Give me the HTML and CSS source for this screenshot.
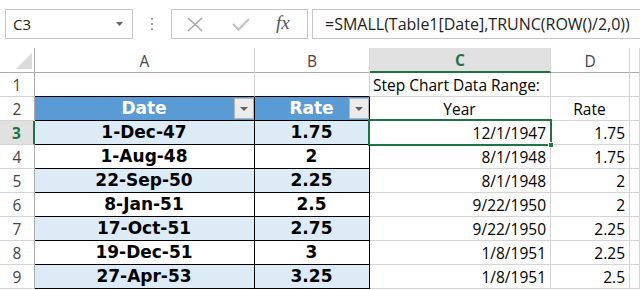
FILE: index.html
```html
<!DOCTYPE html>
<html lang="en">
<head>
    <meta charset="UTF-8">
    <title>Step Chart Data</title>
    <link rel="stylesheet" href="styles.css">
</head>
<body>
    <div class="topbar">
        <div class="namebox">
            <span>C3</span>
            <svg class="caret" width="8" height="5" viewBox="0 0 8 5"><path d="M0 0H7L3.5 4Z" fill="#666"/></svg>
        </div>
        <div class="grip"><i></i><i></i><i></i></div>
        <div class="buttons">
            <svg class="icon" width="16" height="15" viewBox="0 0 16 15"><path d="M1 1L15 14M15 1L1 14" stroke="#a8a8a8" stroke-width="1.6" fill="none"/></svg>
            <svg class="icon" width="18" height="13" viewBox="0 0 18 13"><path d="M1 6L6.5 11.5L17 1" stroke="#c4c4c4" stroke-width="2.4" fill="none"/></svg>
            <span class="fx">fx</span>
        </div>
        <div class="formula">=SMALL(Table1[Date],TRUNC(ROW()/2,0))</div>
    </div>

    <div class="sheet">
        <!-- column headers -->
        <div class="hd corner"><span class="tri"></span></div>
        <div class="hd">A</div>
        <div class="hd">B</div>
        <div class="hd sel">C</div>
        <div class="hd">D</div>
        <div class="hd"></div>

        <!-- row 1 -->
        <div class="rh">1</div>
        <div class="c above"></div>
        <div class="c above"></div>
        <div class="c left">Step Chart Data Range:</div>
        <div class="c"></div>
        <div class="c"></div>

        <!-- row 2 -->
        <div class="rh">2</div>
        <div class="c th">Date<span class="filter"></span></div>
        <div class="c th">Rate<span class="filter"></span></div>
        <div class="c mid">Year</div>
        <div class="c mid">Rate</div>
        <div class="c"></div>

        <!-- row 3 -->
        <div class="rh sel">3</div>
        <div class="c td band">1-Dec-47</div>
        <div class="c td band">1.75</div>
        <div class="c active">12/1/1947<span class="handle"></span></div>
        <div class="c">1.75</div>
        <div class="c"></div>

        <div class="rh">4</div>
        <div class="c td">1-Aug-48</div>
        <div class="c td">2</div>
        <div class="c">8/1/1948</div>
        <div class="c">1.75</div>
        <div class="c"></div>

        <div class="rh">5</div>
        <div class="c td band">22-Sep-50</div>
        <div class="c td band">2.25</div>
        <div class="c">8/1/1948</div>
        <div class="c">2</div>
        <div class="c"></div>

        <div class="rh">6</div>
        <div class="c td">8-Jan-51</div>
        <div class="c td">2.5</div>
        <div class="c">9/22/1950</div>
        <div class="c">2</div>
        <div class="c"></div>

        <div class="rh">7</div>
        <div class="c td band">17-Oct-51</div>
        <div class="c td band">2.75</div>
        <div class="c">9/22/1950</div>
        <div class="c">2.25</div>
        <div class="c"></div>

        <div class="rh">8</div>
        <div class="c td">19-Dec-51</div>
        <div class="c td">3</div>
        <div class="c">1/8/1951</div>
        <div class="c">2.25</div>
        <div class="c"></div>

        <div class="rh">9</div>
        <div class="c td band">27-Apr-53</div>
        <div class="c td band">3.25</div>
        <div class="c">1/8/1951</div>
        <div class="c">2.5</div>
        <div class="c"></div>
    </div>
</body>
</html>
```

FILE: styles.css
```css
* {
    box-sizing: border-box;
}
body {
    margin: 0;
    width: 640px;
    height: 290px;
    overflow: hidden;
    background: #ffffff;
    font-family: "Open Sans", "Liberation Sans", sans-serif;
    font-size: 15.5px;
    color: #000;
}

/* formula bar */
.topbar {
    height: 48px;
    display: flex;
    align-items: flex-start;
    padding-top: 9px;
    padding-left: 5px;
}
.namebox {
    width: 128px;
    height: 30px;
    border: 1px solid #c6c6c6;
    display: flex;
    align-items: center;
    justify-content: space-between;
    padding: 0 8px 0 7px;
    font-size: 15px;
    color: #222;
}
.grip {
    width: 38px;
    height: 30px;
    display: flex;
    flex-direction: column;
    align-items: center;
    justify-content: center;
    gap: 3px;
}
.grip i {
    width: 2px;
    height: 2px;
    background: #a6a6a6;
}
.buttons {
    width: 137px;
    height: 30px;
    border: 1px solid #c6c6c6;
    display: flex;
    align-items: center;
    padding-left: 15px;
}
.buttons .icon:first-child {
    margin-right: 29px;
}
.buttons .icon + .icon {
    margin-right: 26px;
}
.fx {
    font-family: "Liberation Serif", serif;
    font-style: italic;
    font-size: 19px;
    color: #555;
    margin-top: -3px;
}
.formula {
    flex: 1;
    height: 30px;
    margin-left: 4px;
    border: 1px solid #c6c6c6;
    border-right: none;
    padding-left: 12px;
    line-height: 28px;
    font-size: 16px;
    color: #222;
    white-space: nowrap;
    overflow: hidden;
}

/* grid */
.sheet {
    display: grid;
    grid-template-columns: 35px 220px 115px 181px 79px 1fr;
    grid-template-rows: 25px;
    grid-auto-rows: 24px;
    line-height: 20px;
}
.hd {
    border-right: 1px solid #d4d4d4;
    border-bottom: 1px solid #ababab;
    display: flex;
    align-items: center;
    justify-content: center;
    color: #444;
    font-size: 15.5px;
    padding-top: 1px;
}
.hd.corner {
    border-right-color: #ababab;
    position: relative;
}
.tri {
    position: absolute;
    right: 2px;
    bottom: 3px;
    width: 0;
    height: 0;
    border-left: 16px solid transparent;
    border-bottom: 16px solid #dadada;
}
.hd.sel {
    background: #e1e1e1;
    color: #217346;
    font-weight: bold;
    border-bottom: 2px solid #217346;
}
.rh {
    border-right: 1px solid #ababab;
    border-bottom: 1px solid #d4d4d4;
    display: flex;
    align-items: center;
    justify-content: center;
    color: #444;
    font-size: 15.5px;
}
.rh.sel {
    background: #e1e1e1;
    color: #217346;
    font-weight: bold;
    border-right: 2px solid #217346;
}
.c {
    border-right: 1px solid #d4d4d4;
    border-bottom: 1px solid #d4d4d4;
    display: flex;
    align-items: flex-end;
    justify-content: flex-end;
    padding: 0 4px 1px 3px;
    white-space: nowrap;
    position: relative;
}
.c.left {
    justify-content: flex-start;
}
.c.mid {
    justify-content: center;
}
.c.above {
    border-bottom-color: #000;
}

/* table A2:B9 */
.c.th,
.c.td {
    justify-content: center;
    font-family: "DejaVu Sans", Verdana, sans-serif;
    font-weight: bold;
    font-size: 17px;
    border-right-color: #000;
    border-bottom-color: #000;
    padding-bottom: 2px;
}
.c.th {
    background: #5b9bd5;
    color: #fff;
}
.c.band {
    background: #ddebf7;
}
.filter {
    position: absolute;
    right: 0;
    top: 1px;
    width: 20px;
    height: 21px;
    background: #ececec;
    border: 1px solid #b5b5b5;
}
.filter::after {
    content: "";
    position: absolute;
    left: 5px;
    top: 8px;
    border-left: 4px solid transparent;
    border-right: 4px solid transparent;
    border-top: 4px solid #606060;
}

/* active cell */
.c.active::after {
    content: "";
    position: absolute;
    left: -2px;
    top: -2px;
    right: -2px;
    bottom: -2px;
    border: 2px solid #217346;
}
.handle {
    position: absolute;
    right: -4px;
    bottom: -4px;
    width: 6px;
    height: 6px;
    background: #217346;
    border: 1px solid #fff;
    z-index: 1;
}
```
